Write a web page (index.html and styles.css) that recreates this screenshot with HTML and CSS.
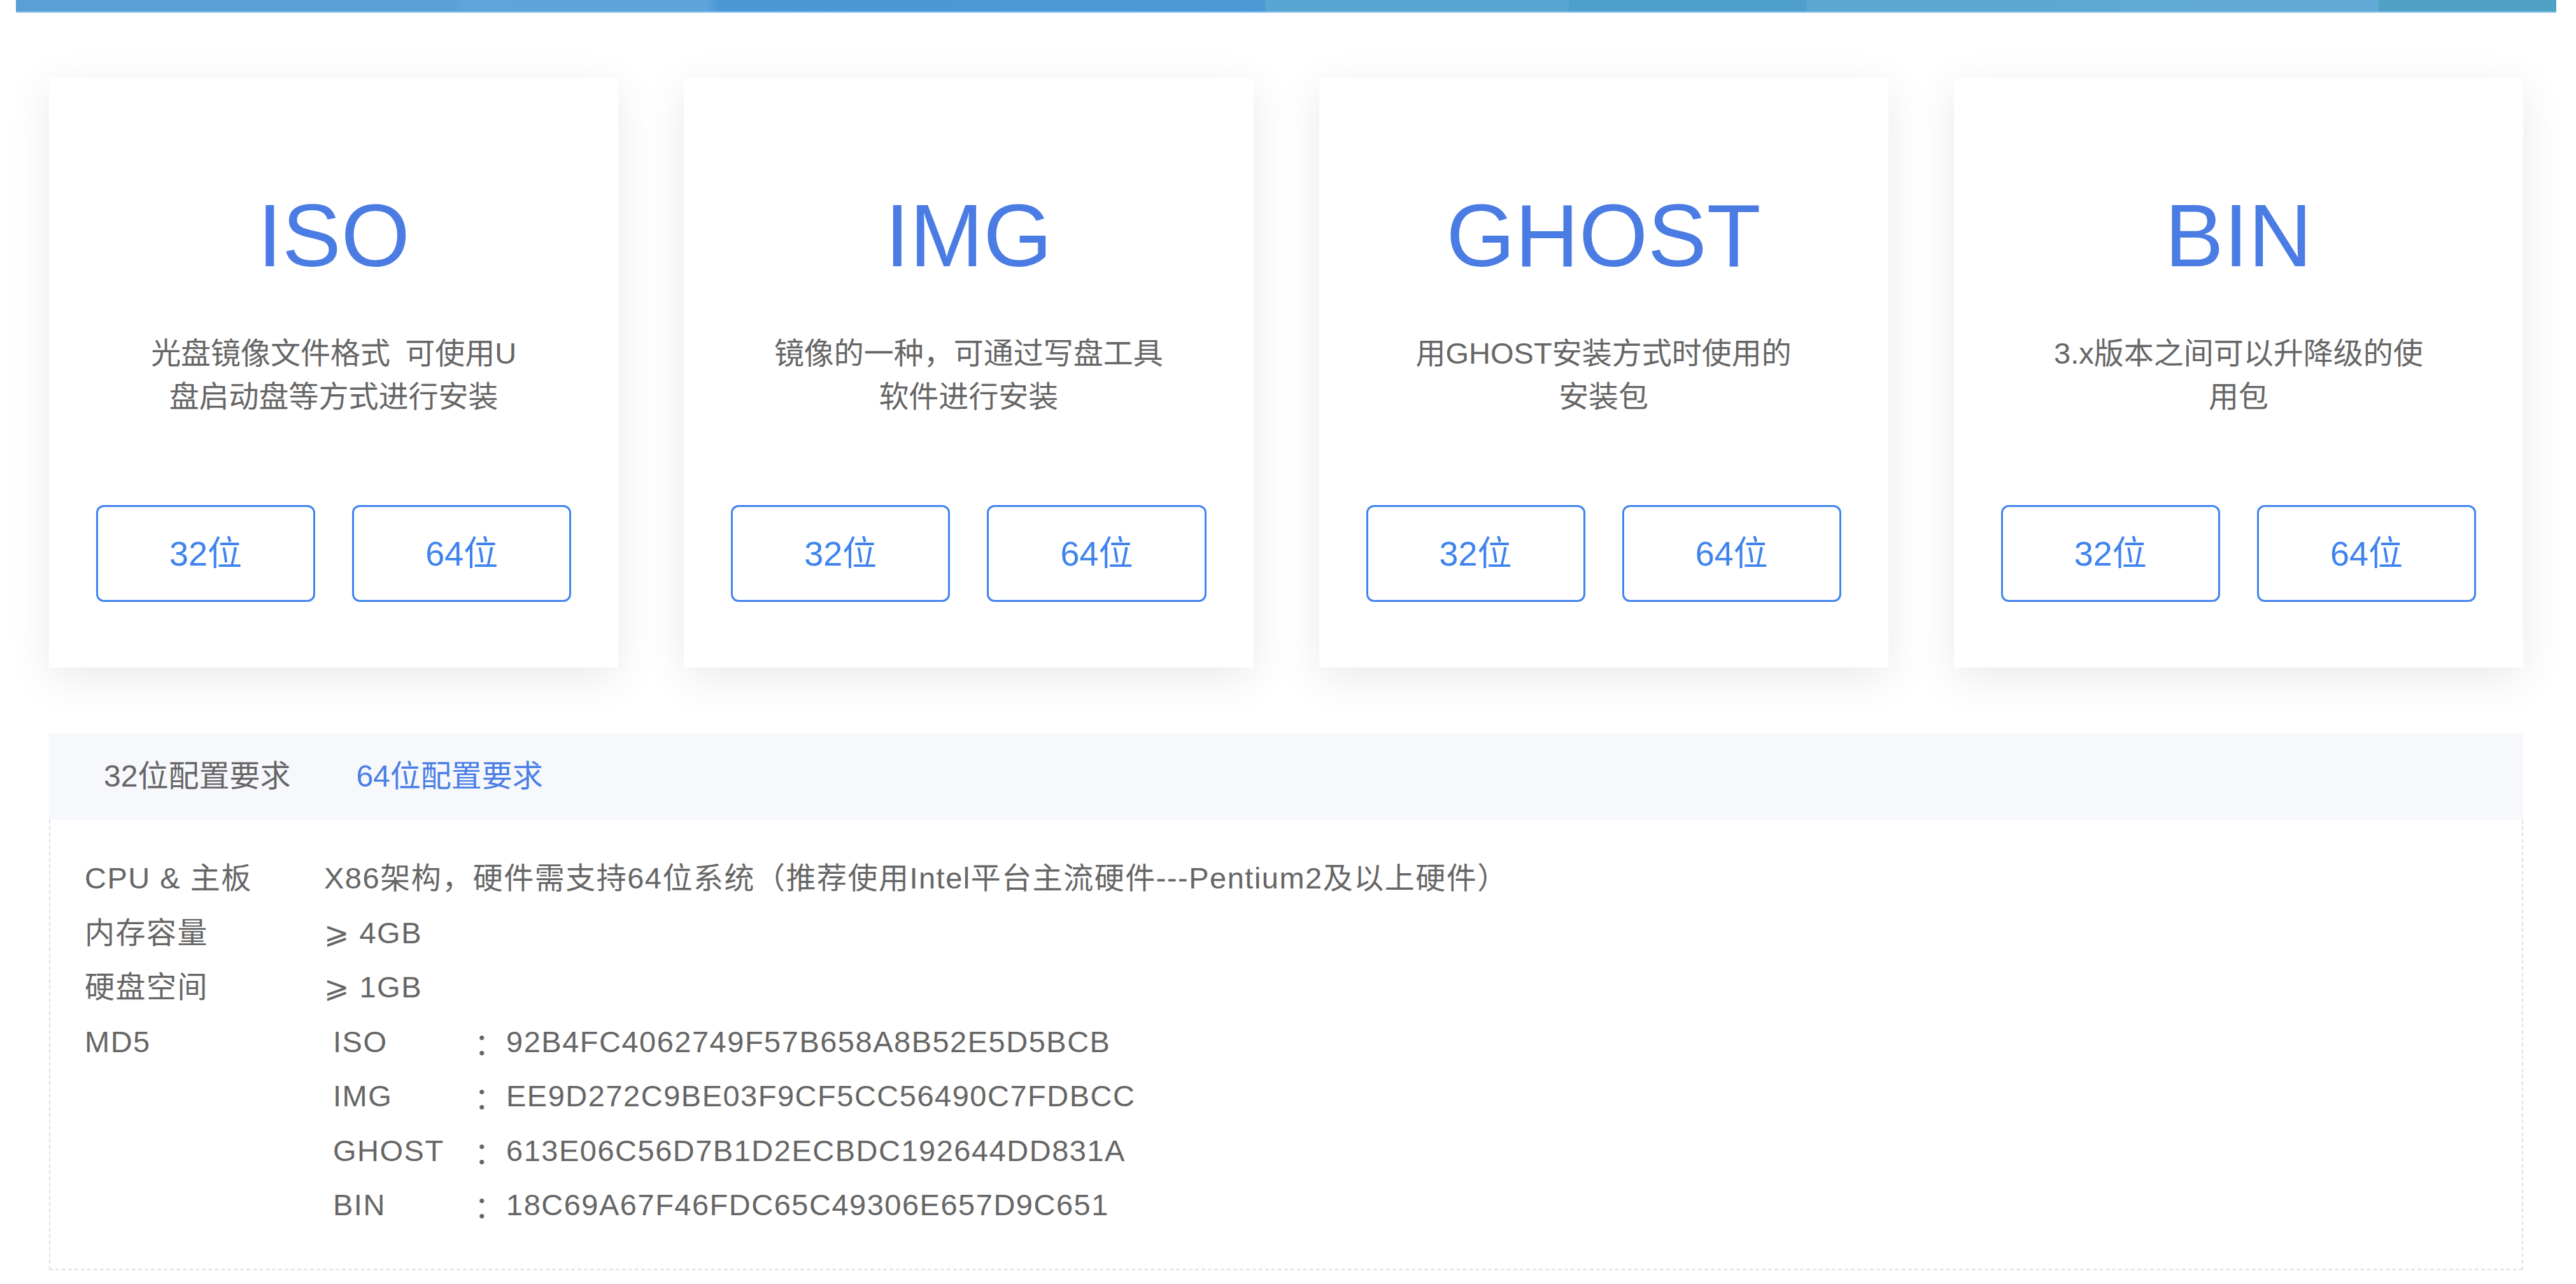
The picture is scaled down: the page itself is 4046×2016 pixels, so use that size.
FILE: index.html
```html
<!DOCTYPE html>
<html lang="zh-CN">
<head>
<meta charset="utf-8">
<title>下载</title>
<link rel="stylesheet" href="styles.css">
</head>
<body>
<div class="banner"></div>
<main class="wrap">
  <section class="cards">
    <div class="card">
      <h2 class="card-title">ISO</h2>
      <p class="card-desc">光盘镜像文件格式 可使用U<br>盘启动盘等方式进行安装</p>
      <div class="card-btns"><a class="btn">32位</a><a class="btn">64位</a></div>
    </div>
    <div class="card">
      <h2 class="card-title">IMG</h2>
      <p class="card-desc">镜像的一种，可通过写盘工具<br>软件进行安装</p>
      <div class="card-btns"><a class="btn">32位</a><a class="btn">64位</a></div>
    </div>
    <div class="card">
      <h2 class="card-title">GHOST</h2>
      <p class="card-desc">用GHOST安装方式时使用的<br>安装包</p>
      <div class="card-btns"><a class="btn">32位</a><a class="btn">64位</a></div>
    </div>
    <div class="card">
      <h2 class="card-title">BIN</h2>
      <p class="card-desc">3.x版本之间可以升降级的使<br>用包</p>
      <div class="card-btns"><a class="btn">32位</a><a class="btn">64位</a></div>
    </div>
  </section>

  <section class="req">
    <div class="tabs">
      <span class="tab">32位配置要求</span>
      <span class="tab active">64位配置要求</span>
    </div>
    <div class="req-body">
      <div class="row"><span class="label">CPU &amp; 主板</span><span class="value">X86架构，硬件需支持64位系统（推荐使用Intel平台主流硬件---Pentium2及以上硬件）</span></div>
      <div class="row"><span class="label">内存容量</span><span class="value"><span class="ge">⩾</span> 4GB</span></div>
      <div class="row"><span class="label">硬盘空间</span><span class="value"><span class="ge">⩾</span> 1GB</span></div>
      <div class="row"><span class="label">MD5</span>
        <div class="md5">
          <span class="md5-key">ISO</span><span class="md5-colon">：</span><span class="md5-val">92B4FC4062749F57B658A8B52E5D5BCB</span>
          <span class="md5-key">IMG</span><span class="md5-colon">：</span><span class="md5-val">EE9D272C9BE03F9CF5CC56490C7FDBCC</span>
          <span class="md5-key">GHOST</span><span class="md5-colon">：</span><span class="md5-val">613E06C56D7B1D2ECBDC192644DD831A</span>
          <span class="md5-key">BIN</span><span class="md5-colon">：</span><span class="md5-val">18C69A67F46FDC65C49306E657D9C651</span>
        </div>
      </div>
    </div>
  </section>
</main>
</body>
</html>
```

FILE: styles.css
```css
* { box-sizing: border-box; }

html, body {
  margin: 0;
  padding: 0;
  background: #ffffff;
}

body {
  font-family: "Liberation Sans", "Noto Sans CJK SC", sans-serif;
  color: #666666;
}

.banner {
  margin-left: 25px;
  width: 3990px;
  height: 20px;
  border-bottom: 2px solid #8ec3ea;
  background: linear-gradient(90deg,
    #5a9fd6 0px, #5ba1d7 690px,
    #5fa5dc 700px, #5ea4db 1085px,
    #4a97d6 1105px, #4b99d6 1962px,
    #58a6d2 1962px, #58a6d2 2439px,
    #4d9fcc 2439px, #4e9fcb 2813px,
    #5aa8d0 2813px, #5ba8d2 3303px,
    #60aad6 3303px, #62aad6 3711px,
    #4fa2c4 3711px, #4fa2c4 3990px);
}

.wrap {
  margin-left: 77px;
  width: 3886px;
}

/* ---------- cards ---------- */
.cards {
  display: grid;
  grid-template-columns: repeat(4, 1fr);
  column-gap: 103px;
  margin-top: 102px;
}

.card {
  background: #ffffff;
  box-shadow: 0 16px 64px rgba(0, 0, 0, 0.085);
  padding: 178px 74px 103px;
  text-align: center;
}

.card-title {
  margin: 0;
  font-size: 139px;
  line-height: 139px;
  font-weight: normal;
  color: #4a7ce3;
}

.card-desc {
  margin: 82px 0 0;
  font-size: 47px;
  line-height: 68px;
  word-spacing: 10px;
  color: #666666;
}

.card-btns {
  display: grid;
  grid-template-columns: 1fr 1fr;
  column-gap: 58px;
  margin-top: 136px;
}

.btn {
  display: block;
  height: 152px;
  line-height: 146px;
  border: 3px solid #3f83ef;
  border-radius: 12px;
  color: #3f83ef;
  font-size: 54px;
  text-align: center;
  cursor: pointer;
}

/* ---------- requirements ---------- */
.req {
  margin-top: 103px;
}

.tabs {
  display: flex;
  gap: 103px;
  height: 136px;
  padding-left: 86px;
  background: #f7f8fc;
}

.tab {
  font-size: 48px;
  line-height: 136px;
  color: #666666;
}

.tab.active {
  color: #4a7fe6;
}

.req-body {
  border: 2px dashed #dcdfe6;
  border-top: none;
  padding: 49px 0 57px 54px;
  font-size: 47px;
  line-height: 85.5px;
  letter-spacing: 1.5px;
  color: #666666;
}

.row {
  display: grid;
  grid-template-columns: 376px 1fr;
}

.ge {
  font-family: "DejaVu Sans", "Noto Sans CJK SC", sans-serif;
}

.md5 {
  display: grid;
  grid-template-columns: 222px 50px auto;
  justify-content: start;
  margin-left: 14px;
}

.md5-colon {
  font-family: "Noto Sans CJK SC", sans-serif;
}
```
